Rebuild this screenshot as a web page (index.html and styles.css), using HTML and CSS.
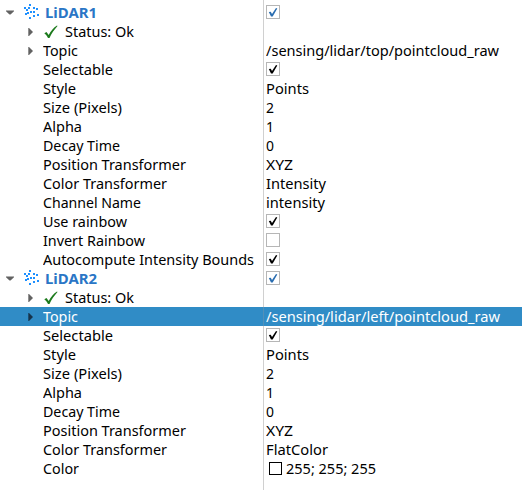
FILE: index.html
```html
<!DOCTYPE html>
<html lang="en">
<head>
<meta charset="utf-8">
<title>Displays</title>
<link rel="stylesheet" href="styles.css">
</head>
<body>
<svg class="defs" aria-hidden="true">
  <symbol id="down" viewBox="0 0 8 5"><path d="M0 0.500h8v0.800L4.500 4.500h-1L0 1.300z"/></symbol>
  <symbol id="right" viewBox="0 0 5 8"><path d="M0.300 0v8h0.700L4.500 4.500v-1L1 0z"/></symbol>
  <symbol id="cloud" viewBox="0 0 16 16"><path d="M5 0h2v2H5zM0 3h2v2H0zM4 3h2v2H4zM9 3h2v2H9zM12 4h2v2h-2zM2 5h2v2H2zM6 7h2v2H6zM9 7h2v2H9zM1 9h2v2H1zM3 8h2v2H3zM13 10h2v2h-2zM9 11h2v2H9zM5 13h2v2H5z"/></symbol>
  <symbol id="ok" viewBox="0 0 14 14"><path d="M0.300 8.300L2.500 7L4.700 10C7 6 9.500 2.500 13 0.500L13.500 1C10 5 7.500 8.500 5.500 13H4C3 11 1.800 9.500 0.300 8.300z"/></symbol>
  <symbol id="tick" viewBox="0 0 14 14"><path d="M2.800 7L4.800 6.700L6 9L10 3L11.300 3.500L6.700 11.500H5z"/></symbol>
</svg>
<main class="tree" id="tree"></main>
<script src="tree.js"></script>
</body>
</html>
```
FILE: styles.css
```css
body { margin: 0; background: #fff; color: #000; font: 15px/19px "Noto Sans", sans-serif; }
.defs { display: none; }
.tree { box-sizing: border-box; height: 490px; padding-top: 3px; overflow: hidden;
  background: linear-gradient(#d0d0d0, #d0d0d0) 263px 0 / 1px 100% no-repeat; }
.row { display: grid; grid-template-columns: 266px 1fr; height: 19px; white-space: nowrap; }
.name, .value { display: flex; align-items: center; }
.text { display: inline-block; transform-origin: 0 50%; }
.selected { background: linear-gradient(#5290b9, #5290b9) 263px 0 / 1px 100% no-repeat #308cc6; color: #fff; }
.arrow { display: flex; align-items: center; width: 10px; margin-left: 6px; fill: #626262; }
.arrow.inner { width: 7px; margin-left: 28px; }
.selected .arrow { fill: #16334a; }
.down { width: 8px; height: 5px; }
.right { width: 5px; height: 8px; }
.cloud { width: 16px; height: 16px; margin: -1px 5px 0 8px; fill: #1e90ff; }
.ok { width: 14px; height: 14px; margin: 0 7px 0 9px; fill: #1c7a1c; }
.display { color: #2a76c6; font-weight: 700; }
.label { margin-left: 8px; }
.leaf { margin-left: 43px; }
.check { box-sizing: border-box; width: 14px; height: 14px; margin-top: -1px; border: 1px solid #b6b6b6; display: flex; }
.check svg { width: 14px; height: 14px; margin: -1px; flex: none; fill: #000; }
.check.blue svg { fill: #2a6db0; }
.swatch { box-sizing: border-box; width: 13px; height: 13px; margin: 0 4px 0 3px; border: 1px solid #000; }
```
FILE: tree.js
```javascript
const rows = [
  ["display", "LiDAR1", 52, "on"],
  ["status", "Status: Ok", 69],
  ["topic", "Topic", 35, "/sensing/lidar/top/pointcloud_raw", 233],
  ["leaf", "Selectable", 70, "on"],
  ["leaf", "Style", 33, "Points", 43],
  ["leaf", "Size (Pixels)", 79, "2", 8],
  ["leaf", "Alpha", 39, "1", 8],
  ["leaf", "Decay Time", 77, "0", 8],
  ["leaf", "Position Transformer", 143, "XYZ", 27],
  ["leaf", "Color Transformer", 124, "Intensity", 60],
  ["leaf", "Channel Name", 98, "intensity", 59],
  ["leaf", "Use rainbow", 84, "on"],
  ["leaf", "Invert Rainbow", 102, "off"],
  ["leaf", "Autocompute Intensity Bounds", 211, "on"],
  ["display", "LiDAR2", 52, "on"],
  ["status", "Status: Ok", 69],
  ["topic selected", "Topic", 35, "/sensing/lidar/left/pointcloud_raw", 234],
  ["leaf", "Selectable", 70, "on"],
  ["leaf", "Style", 33, "Points", 43],
  ["leaf", "Size (Pixels)", 79, "2", 8],
  ["leaf", "Alpha", 39, "1", 8],
  ["leaf", "Decay Time", 77, "0", 8],
  ["leaf", "Position Transformer", 143, "XYZ", 27],
  ["leaf", "Color Transformer", 124, "FlatColor", 62],
  ["leaf", "Color", 36, "255; 255; 255", 90, "swatch"],
];
const icon = (id) => `<svg class="${id}"><use href="#${id}"/></svg>`;
const text = (s, w, cls = "") => `<span class="text ${cls}" data-width="${w}">${s}</span>`;
const lead = {
  display: `<span class="arrow">${icon("down")}</span>${icon("cloud")}`,
  status: `<span class="arrow inner">${icon("right")}</span>${icon("ok")}`,
  topic: `<span class="arrow inner">${icon("right")}</span>`,
  leaf: "",
};
document.getElementById("tree").innerHTML = rows.map(([type, name, w, value, vw, extra]) => {
  const kind = type.split(" ")[0];
  const cls = { display: "display", status: "", topic: "label", leaf: "leaf" }[kind];
  let v = "";
  if (value === "on" || value === "off") {
    v = `<span class="check ${kind === "display" ? "blue" : ""}">${value === "on" ? icon("tick") : ""}</span>`;
  } else if (value) {
    v = (extra ? '<span class="swatch"></span>' : "") + text(value, vw);
  }
  return `<div class="row ${type.includes("selected") ? "selected" : ""}"><div class="name">${lead[kind]}${text(name, w, cls)}</div><div class="value">${v}</div></div>`;
}).join("");
document.querySelectorAll(".text").forEach((el) => {
  el.style.transform = `scaleX(${el.dataset.width / el.getBoundingClientRect().width})`;
});
```
